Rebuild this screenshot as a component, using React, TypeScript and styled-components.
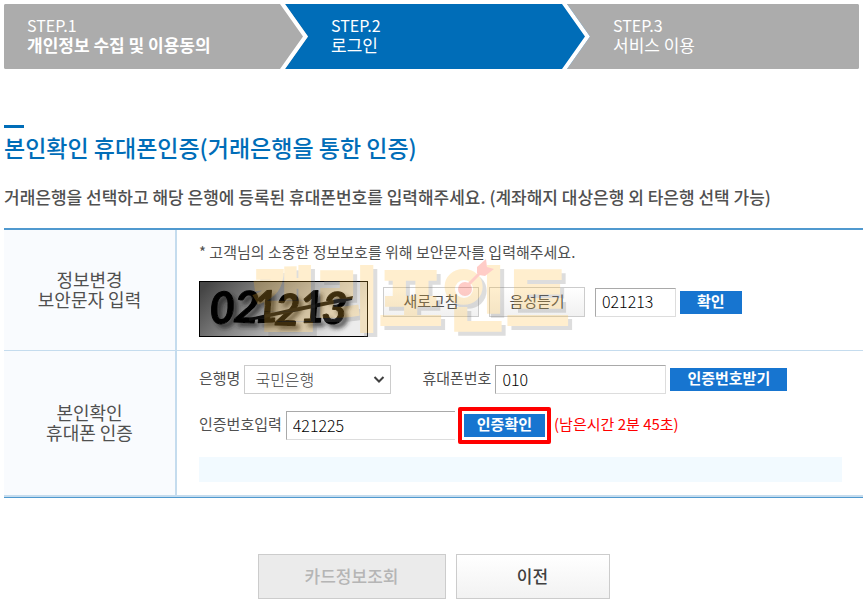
import React, { useState } from "react";
import styled, { createGlobalStyle } from "styled-components";

const GlobalStyle = createGlobalStyle`
  *, *::before, *::after { box-sizing: border-box; }
  body { margin: 0; background: #fff; color: #505050; }
  body, button, input, select { font-family: "Noto Sans CJK KR", sans-serif; }
  h1, p, ol { margin: 0; padding: 0; }
`;

const Page = styled.main`
  padding: 4px 0 4px 4px;
`;

const Steps = styled.ol`
  display: grid;
  grid-template-columns: 304fr 282fr 269fr;
  height: 65px;
  margin-right: 4px;
  list-style: none;
  overflow: hidden;
  border-radius: 2px;
  background: #acacac;
`;

const StepItem = styled.li<{ $current: boolean }>`
  position: relative;
  display: flex;
  flex-direction: column;
  justify-content: center;
  padding: 0 0 4px 23px;
  background: ${(p) => (p.$current ? "#006db8" : "#acacac")};
  color: #fff;
  white-space: nowrap;
`;

const StepNumber = styled.span`
  font-size: 16px;
  line-height: 20px;
`;

const StepName = styled.span<{ $bold: boolean }>`
  font-size: 17px;
  font-weight: ${(p) => (p.$bold ? 700 : 400)};
  line-height: 20px;
`;

const StepArrow = styled.svg`
  position: absolute;
  top: 0;
  left: -28px;
  width: 29px;
  height: 65px;
`;

const Title = styled.h1`
  margin-top: 56px;
  color: #006db8;
  font-size: 23px;
  font-weight: 500;
  line-height: 32px;

  &::before {
    content: "";
    display: block;
    width: 20px;
    height: 3px;
    margin-bottom: 3px;
    background: #006db8;
  }
`;

const Guide = styled.p`
  margin: 22px 0 19px;
  font-size: 17px;
  font-weight: 500;
  line-height: 24px;
`;

const FormTable = styled.table`
  width: 100%;
  border-collapse: separate;
  border-spacing: 0;
  border-top: 2px solid #5099cf;
  border-bottom: 1px solid #5099cf;
`;

const HeadCell = styled.th`
  width: 173px;
  padding: 0 0 2px;
  border-right: 2px solid #c5dcee;
  border-bottom: 1px solid #c5dcee;
  background: #f9fbfe;
  font-size: 18px;
  font-weight: 400;
  line-height: 20px;

  tr:last-child > & { border-bottom-width: 2px; }
`;

const Cell = styled.td`
  position: relative;
  padding: 12px 21px 13px 22px;
  border-bottom: 1px solid #c5dcee;
  vertical-align: top;

  tr:last-child > & {
    padding-top: 14px;
    border-bottom-width: 2px;
  }
`;

const Notice = styled.p`
  font-size: 15px;
  line-height: 20px;
`;

const CaptchaRow = styled.div`
  display: flex;
  align-items: flex-start;
  gap: 15px;
  margin-top: 19px;
`;

const CaptchaImage = styled.svg`
  display: block;
  flex: none;
  width: 169px;
  height: 56px;
`;

const CaptchaControls = styled.div`
  display: flex;
  align-items: center;
  gap: 10px;
  padding-top: 6px;
`;

const FieldGroup = styled.div`
  display: flex;
  align-items: center;
  gap: 4px;
`;

const FormRow = styled.div<{ $gap: number }>`
  display: flex;
  align-items: center;
  gap: ${(p) => p.$gap}px;

  & + & { margin-top: 13px; }
`;

const LightButton = styled.button`
  width: 96px;
  height: 30px;
  padding: 0 0 2px;
  border: 1px solid #ccc;
  background: linear-gradient(#fff, #f1f1f1);
  color: #505050;
  font-size: 15px;
  line-height: 20px;
`;

const BlueButton = styled.button<{ $inset: number }>`
  height: 23px;
  padding: 0 ${(p) => p.$inset}px 3px;
  border: 0;
  background: #1775d0;
  color: #fff;
  font-size: 15px;
  font-weight: 700;
  line-height: 20px;
  white-space: nowrap;
`;

const Field = styled.input<{ $width: number }>`
  width: ${(p) => p.$width}px;
  height: 29px;
  padding: 0 6px 2px;
  border: 1px solid #ddd;
  border-top-color: #a9a9a9;
  border-left-color: #a9a9a9;
  border-radius: 0;
  background: #fff;
  color: #000;
  font-size: 16px;
  font-weight: 300;
`;

const OpenField = styled(Field)`
  border-right: 0;
`;

const Label = styled.label`
  padding-bottom: 4px;
  font-size: 15px;
  line-height: 24px;
  white-space: nowrap;
`;

const SelectBox = styled.div`
  position: relative;
`;

const BankSelect = styled.select`
  appearance: none;
  display: block;
  width: 147px;
  height: 29px;
  padding: 0 10px 2px;
  border: 1px solid #ccc;
  border-radius: 0;
  background: #fff;
  color: #404040;
  font-size: 16px;
  font-weight: 300;
`;

const Chevron = styled.svg`
  position: absolute;
  top: 10px;
  right: 6px;
  width: 12px;
  height: 9px;
  pointer-events: none;
`;

const Highlight = styled.div`
  display: flex;
  padding: 3px 2px;
  border: 4px solid #f00;
  border-radius: 2px;
`;

const Remaining = styled.span`
  padding-bottom: 4px;
  color: #f00;
  font-size: 15px;
  line-height: 24px;
`;

const Message = styled.div`
  height: 25px;
  margin-top: 13px;
  background: #f2faff;
`;

const Watermark = styled.svg`
  position: absolute;
  top: 25px;
  left: 66px;
  width: 340px;
  height: 90px;
  overflow: visible;
  opacity: 0.24;
  pointer-events: none;
  font-family: "Noto Sans CJK KR", sans-serif;
  font-size: 69px;
  font-weight: 900;
`;

const Actions = styled.div`
  display: flex;
  justify-content: center;
  gap: 10px;
  margin-top: 56px;
`;

const ActionButton = styled.button<{ $width: number }>`
  width: ${(p) => p.$width}px;
  height: 45px;
  padding: 0 0 2px;
  border: 1px solid #ccc;
  background: linear-gradient(#fff, #f2f2f2);
  color: #404040;
  font-size: 17px;
  font-weight: 500;

  &:disabled {
    background: #ebebeb;
    color: #b5b5b5;
  }
`;

const steps = [
  { number: "STEP.1", name: "개인정보 수집 및 이용동의", bold: true, current: false },
  { number: "STEP.2", name: "로그인", bold: false, current: true },
  { number: "STEP.3", name: "서비스 이용", bold: false, current: false },
];

function Step({ step, first }: { step: (typeof steps)[number]; first: boolean }) {
  return (
    <StepItem $current={step.current} aria-current={step.current ? "step" : undefined}>
      {!first && (
        <StepArrow viewBox="0 0 29 65" aria-hidden="true">
          <path d="M5 0H29V65H5L28 32.5Z" fill={step.current ? "#006db8" : "#acacac"} />
          <path d="M0 0H5L28 32.5L5 65H0L23 32.5Z" fill="#fff" />
        </StepArrow>
      )}
      <StepNumber>{step.number}</StepNumber>
      <StepName $bold={step.bold}>{step.name}</StepName>
    </StepItem>
  );
}

const digits = [
  { char: "0", x: 11, y: 43, tilt: -2 },
  { char: "2", x: 34, y: 41, tilt: 3 },
  { char: "1", x: 55, y: 42, tilt: -3 },
  { char: "2", x: 75, y: 44, tilt: 2 },
  { char: "1", x: 101, y: 42, tilt: -2 },
  { char: "3", x: 122, y: 42, tilt: 3 },
];

function Digits() {
  return (
    <>
      {digits.map((d) => (
        <text key={d.x} x={d.x} y={d.y} transform={`rotate(${d.tilt} ${d.x} ${d.y})`}>
          {d.char}
        </text>
      ))}
    </>
  );
}

function Captcha() {
  return (
    <CaptchaImage viewBox="0 0 169 56" role="img" aria-label="보안문자">
      <defs>
        <linearGradient id="captcha-bg" x1="0" y1="0.2" x2="1" y2="0.5">
          <stop offset="0" stopColor="#454545" />
          <stop offset="0.35" stopColor="#858585" />
          <stop offset="0.75" stopColor="#cfcfcf" />
          <stop offset="1" stopColor="#ececec" />
        </linearGradient>
        <filter id="captcha-shadow" x="-10%" y="-20%" width="120%" height="150%">
          <feDropShadow dx="4" dy="4" stdDeviation="2" floodColor="#222" floodOpacity="0.7" />
        </filter>
      </defs>
      <rect x="0.5" y="0.5" width="168" height="55" fill="url(#captcha-bg)" stroke="#000" />
      <g
        fill="#060606"
        stroke="#060606"
        strokeWidth="1"
        strokeLinejoin="round"
        fontFamily="Lato, sans-serif"
        fontSize="44"
        fontWeight="700"
        fontStyle="italic"
        filter="url(#captcha-shadow)"
      >
        <Digits />
      </g>
      <path d="M50 37L90 28L154 15L153 19L100 30L50 40Z" fill="#0c0c0c" />
    </CaptchaImage>
  );
}

function BrandMark() {
  return (
    <Watermark viewBox="0 0 340 90" aria-hidden="true">
      <g strokeWidth="2">
        <text x="13" y="74" fill="#767676" stroke="#767676">캘리포인트</text>
        <text x="9" y="70" fill="#ffbc37" stroke="#ffbc37">캘리포인트</text>
      </g>
      <circle cx="221" cy="34" r="9" fill="#fff" />
      <circle cx="222" cy="34" r="7" fill="#ff2f1a" />
      <path d="M221 34L237 18" stroke="#ff2f1a" strokeWidth="3" />
      <path d="M234 18V12L243 4L244 12L251 14L242 21L236 20Z" fill="#ff2f1a" />
    </Watermark>
  );
}

export default function App() {
  const [captcha, setCaptcha] = useState("021213");
  const [bank, setBank] = useState("국민은행");
  const [phone, setPhone] = useState("010");
  const [code, setCode] = useState("421225");

  return (
    <>
      <GlobalStyle />
      <Page>
        <Steps>
          {steps.map((step, index) => (
            <Step key={step.number} step={step} first={index === 0} />
          ))}
        </Steps>

        <Title>본인확인 휴대폰인증(거래은행을 통한 인증)</Title>
        <Guide>
          거래은행을 선택하고 해당 은행에 등록된 휴대폰번호를 입력해주세요. (계좌해지 대상은행 외 타은행 선택 가능)
        </Guide>

        <FormTable>
          <tbody>
            <tr>
              <HeadCell scope="row">
                정보변경
                <br />
                보안문자 입력
              </HeadCell>
              <Cell>
                <Notice>* 고객님의 소중한 정보보호를 위해 보안문자를 입력해주세요.</Notice>
                <CaptchaRow>
                  <Captcha />
                  <CaptchaControls>
                    <LightButton type="button">새로고침</LightButton>
                    <LightButton type="button">음성듣기</LightButton>
                    <FieldGroup>
                      <Field
                        $width={81}
                        aria-label="보안문자 입력"
                        value={captcha}
                        onChange={(e) => setCaptcha(e.target.value)}
                      />
                      <BlueButton type="button" $inset={17}>확인</BlueButton>
                    </FieldGroup>
                  </CaptchaControls>
                </CaptchaRow>
                <BrandMark />
              </Cell>
            </tr>
            <tr>
              <HeadCell scope="row">
                본인확인
                <br />
                휴대폰 인증
              </HeadCell>
              <Cell>
                <FormRow $gap={31}>
                  <FieldGroup>
                    <Label htmlFor="bank">은행명</Label>
                    <SelectBox>
                      <BankSelect id="bank" value={bank} onChange={(e) => setBank(e.target.value)}>
                        <option>국민은행</option>
                      </BankSelect>
                      <Chevron viewBox="0 0 12 9" aria-hidden="true">
                        <path d="M1.5 2L6 6.5L10.5 2" fill="none" stroke="#404040" strokeWidth="2" />
                      </Chevron>
                    </SelectBox>
                  </FieldGroup>
                  <FieldGroup>
                    <Label htmlFor="phone">휴대폰번호</Label>
                    <Field
                      id="phone"
                      type="tel"
                      $width={171}
                      value={phone}
                      onChange={(e) => setPhone(e.target.value)}
                    />
                    <BlueButton type="button" $inset={17}>인증번호받기</BlueButton>
                  </FieldGroup>
                </FormRow>
                <FormRow $gap={3}>
                  <FieldGroup>
                    <Label htmlFor="code">인증번호입력</Label>
                    <OpenField id="code" $width={169} value={code} onChange={(e) => setCode(e.target.value)} />
                  </FieldGroup>
                  <Highlight>
                    <BlueButton type="button" $inset={13}>인증확인</BlueButton>
                  </Highlight>
                  <Remaining>(남은시간 2분 45초)</Remaining>
                </FormRow>
                <Message role="status" />
              </Cell>
            </tr>
          </tbody>
        </FormTable>

        <Actions>
          <ActionButton type="button" $width={188} disabled>카드정보조회</ActionButton>
          <ActionButton type="button" $width={154}>이전</ActionButton>
        </Actions>
      </Page>
    </>
  );
}
